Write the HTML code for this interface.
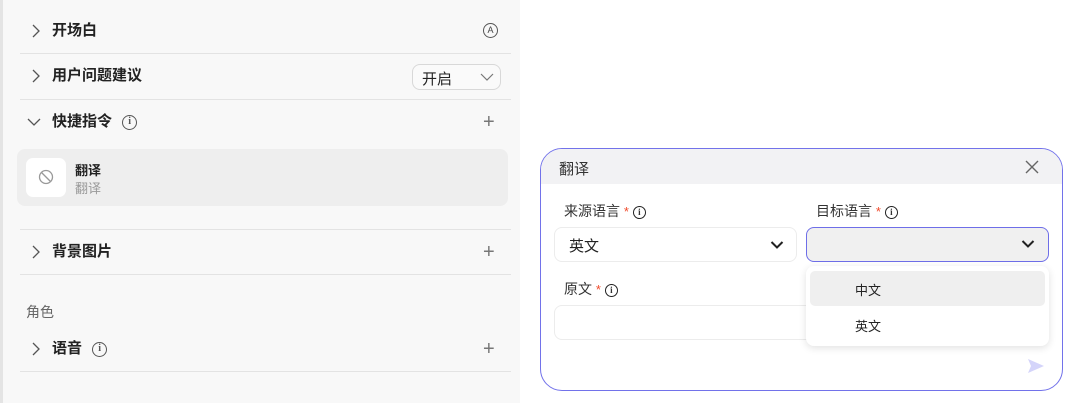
<!DOCTYPE html>
<html><head><meta charset="utf-8"><style>
*{box-sizing:border-box;margin:0;padding:0}
body{width:1080px;height:403px;overflow:hidden;background:#fff;font-family:"Liberation Sans","Noto Sans CJK SC",sans-serif;position:relative;color:#1f1f1f}
.left{position:absolute;left:0;top:0;width:520px;height:403px;background:#f8f8f8;border-left:3px solid #e4e4e4}
.a{position:absolute}
.hr{position:absolute;left:17px;width:491px;height:1px;background:#e3e3e3}
.t{position:absolute;font-size:15px;font-weight:700;color:#222;line-height:20px}
.chev{position:absolute;left:28px}
.info{display:inline-block;width:15px;height:15px;border:1.2px solid #555;border-radius:50%;font-size:10px;text-align:center;line-height:12px;color:#555;font-family:"Liberation Serif",serif;vertical-align:middle}
.plus{position:absolute;left:480px;font-size:20px;color:#777;font-weight:300;line-height:20px}
.dlg{position:absolute;left:540px;top:148px;width:523px;height:243px;border:1.5px solid #7272ea;border-radius:22px;overflow:hidden;background:#fff}
.lbl{position:absolute;font-size:14px;color:#333;line-height:18px}
.star{color:#f04b2c;font-size:13px}
.i2{display:inline-block;width:13px;height:13px;border:1.5px solid #222;border-radius:50%;font-size:9px;font-weight:700;text-align:center;line-height:10px;vertical-align:middle;font-family:"Liberation Serif",serif}
</style></head><body>
<div class="left">
<div class="t" style="left:49px;top:-12px;color:#999;font-weight:400">·····</div>
<svg class="chev" style="top:24px" width="10" height="14"><path d="M2 1l6 6-6 6" fill="none" stroke="#555" stroke-width="1.3"/></svg>
<div class="t" style="left:49px;top:21px">开场白</div>
<div class="a" style="left:480px;top:23px;width:15px;height:15px;border:1.2px solid #555;border-radius:50%;font-size:9px;text-align:center;line-height:12px;color:#444">A</div>
<div class="hr" style="top:53px"></div>
<svg class="chev" style="top:69px" width="10" height="14"><path d="M2 1l6 6-6 6" fill="none" stroke="#555" stroke-width="1.3"/></svg>
<div class="t" style="left:49px;top:66px">用户问题建议</div>
<div class="a" style="left:409px;top:64px;width:89px;height:26px;border:1px solid #d8d8d8;border-radius:8px;background:#fafafa"><span class="a" style="left:9px;top:3px;font-size:15px;color:#222">开启</span><svg class="a" style="left:67px;top:8px" width="14" height="9"><path d="M1 1l6 6 6-6" fill="none" stroke="#777" stroke-width="1.2"/></svg></div>
<div class="hr" style="top:99px"></div>
<svg class="a" style="left:24px;top:118px" width="14" height="9"><path d="M1 1l6 6 6-6" fill="none" stroke="#555" stroke-width="1.3"/></svg>
<div class="t" style="left:49px;top:112px">快捷指令 <span class="info" style="margin-left:6px">i</span></div>
<div class="plus" style="top:112px">+</div>
<div class="a" style="left:14px;top:149px;width:491px;height:57px;background:#eeeeee;border-radius:8px"></div>
<div class="a" style="left:23px;top:158px;width:40px;height:39px;background:#fff;border-radius:7px"><svg class="a" style="left:12px;top:11px" width="16" height="16"><circle cx="8" cy="8" r="6.5" fill="none" stroke="#999" stroke-width="1.3"/><path d="M3.5 3.5l9 9" stroke="#999" stroke-width="1.3"/></svg></div>
<div class="a" style="left:72px;top:160px;font-size:13px;font-weight:700;color:#222">翻译</div>
<div class="a" style="left:72px;top:178px;font-size:13px;color:#999">翻译</div>
<div class="hr" style="top:229px"></div>
<svg class="chev" style="top:245px" width="10" height="14"><path d="M2 1l6 6-6 6" fill="none" stroke="#555" stroke-width="1.3"/></svg>
<div class="t" style="left:49px;top:242px">背景图片</div>
<div class="plus" style="top:242px">+</div>
<div class="hr" style="top:274px"></div>
<div class="a" style="left:23px;top:302px;font-size:14px;color:#666">角色</div>
<svg class="chev" style="top:342px" width="10" height="14"><path d="M2 1l6 6-6 6" fill="none" stroke="#555" stroke-width="1.3"/></svg>
<div class="t" style="left:49px;top:339px">语音 <span class="info" style="margin-left:6px">i</span></div>
<div class="plus" style="top:339px">+</div>
<div class="hr" style="top:371px"></div>
</div>

<div class="dlg">
<div class="a" style="left:0;top:0;width:523px;height:35px;background:#f2f2f4"></div>
<div class="a" style="left:18px;top:9px;font-size:15px;color:#333">翻译</div>
<svg class="a" style="left:483px;top:10px" width="16" height="16"><path d="M2 2l12 12M14 2L2 14" stroke="#666" stroke-width="1.4"/></svg>
<div class="lbl" style="left:23px;top:53px">来源语言 <span class="star">*</span> <span class="i2">i</span></div>
<div class="lbl" style="left:275px;top:53px">目标语言 <span class="star">*</span> <span class="i2">i</span></div>
<div class="a" style="left:13px;top:78px;width:243px;height:35px;border:1px solid #ececec;border-radius:8px;background:#fff"><span class="a" style="left:14px;top:7px;font-size:15px;color:#222">英文</span><svg class="a" style="left:215px;top:12px" width="14" height="10"><path d="M1.5 2l5.5 5.5 5.5-5.5" fill="none" stroke="#222" stroke-width="2"/></svg></div>
<div class="a" style="left:265px;top:78px;width:243px;height:35px;border:1.5px solid #6e6ee8;border-radius:8px;background:#f0f0f0"><svg class="a" style="left:214px;top:11px" width="14" height="10"><path d="M1.5 2l5.5 5.5 5.5-5.5" fill="none" stroke="#222" stroke-width="2"/></svg></div>
<div class="lbl" style="left:23px;top:131px">原文 <span class="star">*</span> <span class="i2">i</span></div>
<div class="a" style="left:13px;top:156px;width:300px;height:35px;border:1px solid #ececec;border-radius:8px;background:#fff"></div>
<div class="a" style="left:265px;top:117px;width:243px;height:80px;background:#fff;border-radius:8px;box-shadow:0 2px 8px rgba(0,0,0,0.12)">
<div class="a" style="left:4px;top:5px;width:235px;height:35px;background:#efefef;border-radius:5px"></div>
<div class="a" style="left:49px;top:14px;font-size:13px;color:#222">中文</div>
<div class="a" style="left:49px;top:50px;font-size:13px;color:#222">英文</div>
</div>
<svg class="a" style="left:486px;top:208px" width="18" height="18"><path d="M1 2l16 7-16 7 3-7z" fill="#d4d4fa"/></svg>
</div>
</body></html>
